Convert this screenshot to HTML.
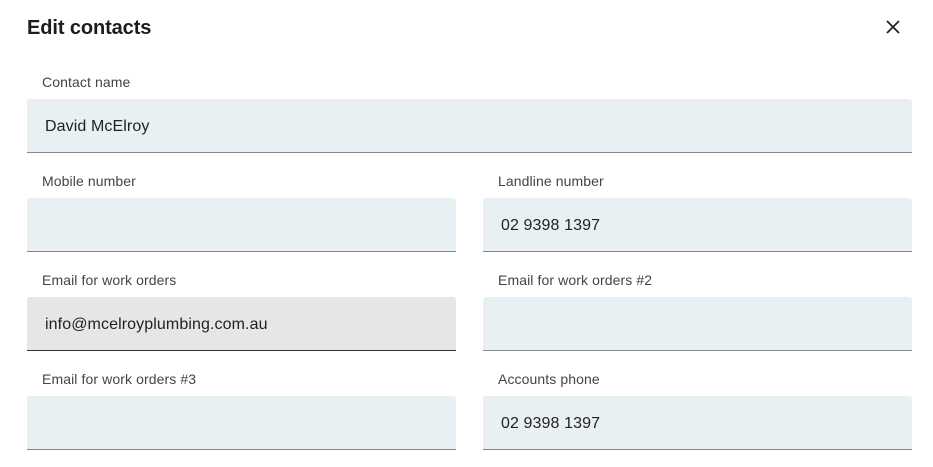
<!DOCTYPE html><html><head><style>
body{margin:0;width:933px;height:467px;background:#fff;font-family:"Liberation Sans",sans-serif;color:#1f2328;position:relative;overflow:hidden}
h1{position:absolute;left:27px;top:17px;margin:0;font-size:20px;font-weight:bold;letter-spacing:-0.1px;color:#1a1c1e}
.x{position:absolute;left:885px;top:19px}
.l{position:absolute;font-size:14px;letter-spacing:0.1px;color:#444;line-height:16px}
.f{position:absolute;height:54px;background:#e9f0f3;border-bottom:1px solid #888;border-radius:3px 3px 0 0;box-sizing:border-box;font-size:16px;line-height:55px;padding-left:18px;color:#222;letter-spacing:0.1px}
.g{background:#e6e6e6;border-bottom-color:#333}
</style></head><body>
<h1>Edit contacts</h1>
<svg class="x" width="16" height="16" viewBox="0 0 16 16"><path d="M2 2L14 14M14 2L2 14" stroke="#222" stroke-width="1.8"/></svg>
<div class="l" style="left:42px;top:74px">Contact name</div>
<div class="f" style="left:27px;top:99px;width:885px">David McElroy</div>
<div class="l" style="left:42px;top:173px">Mobile number</div>
<div class="f" style="left:27px;top:198px;width:429px"></div>
<div class="l" style="left:498px;top:173px">Landline number</div>
<div class="f" style="left:483px;top:198px;width:429px">02 9398 1397</div>
<div class="l" style="left:42px;top:272px">Email for work orders</div>
<div class="f g" style="left:27px;top:297px;width:429px">info@mcelroyplumbing.com.au</div>
<div class="l" style="left:498px;top:272px">Email for work orders #2</div>
<div class="f" style="left:483px;top:297px;width:429px"></div>
<div class="l" style="left:42px;top:371px">Email for work orders #3</div>
<div class="f" style="left:27px;top:396px;width:429px"></div>
<div class="l" style="left:498px;top:371px">Accounts phone</div>
<div class="f" style="left:483px;top:396px;width:429px">02 9398 1397</div>
</body></html>
